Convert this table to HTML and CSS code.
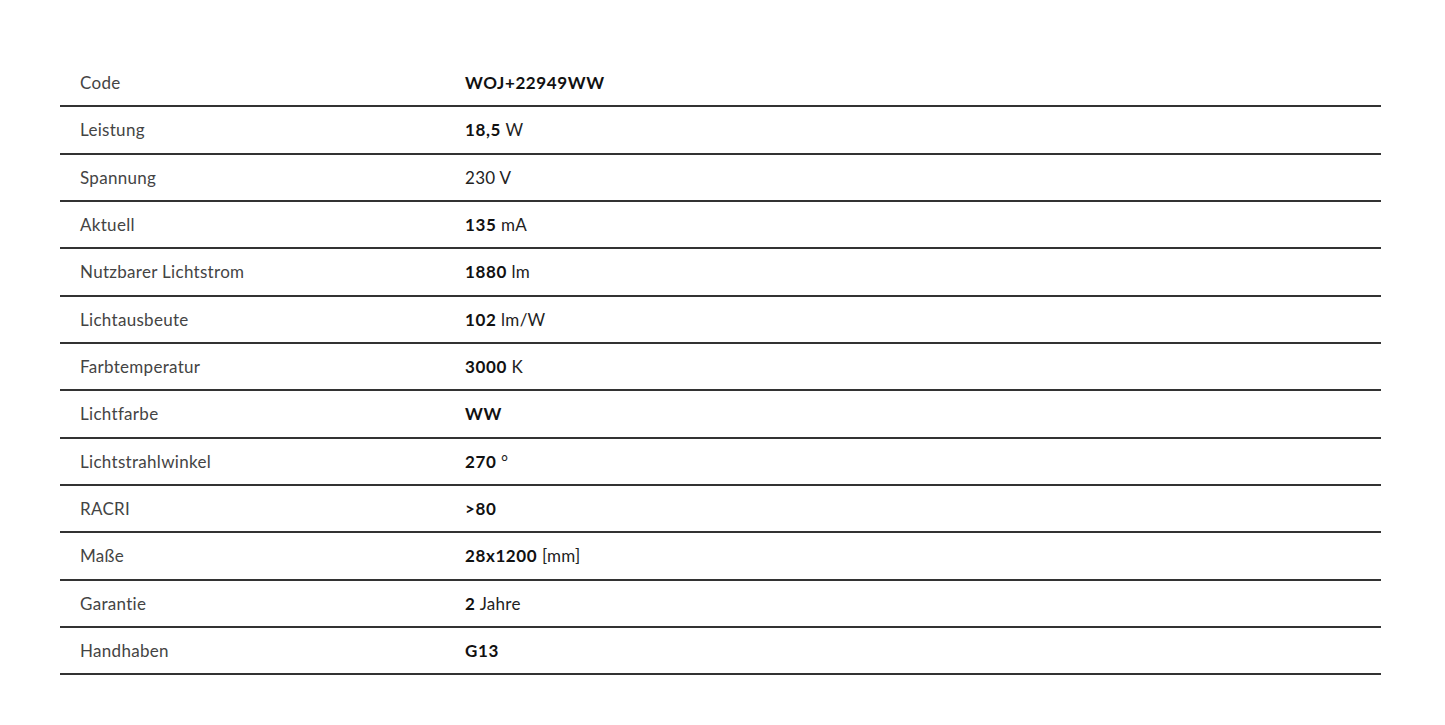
FILE: index.html
```html
<!DOCTYPE html>
<html lang="de">
<head>
<meta charset="utf-8">
<title>Technische Daten</title>
<link rel="stylesheet" href="styles.css">
</head>
<body>
<div class="specs">
  <div class="row"><div class="label">Code</div><div class="value"><b>WOJ+22949WW</b></div></div>
  <div class="row"><div class="label">Leistung</div><div class="value"><b>18,5</b> W</div></div>
  <div class="row"><div class="label">Spannung</div><div class="value">230 V</div></div>
  <div class="row"><div class="label">Aktuell</div><div class="value"><b>135</b> mA</div></div>
  <div class="row"><div class="label">Nutzbarer Lichtstrom</div><div class="value"><b>1880</b> lm</div></div>
  <div class="row"><div class="label">Lichtausbeute</div><div class="value"><b>102</b> lm/W</div></div>
  <div class="row"><div class="label">Farbtemperatur</div><div class="value"><b>3000</b> K</div></div>
  <div class="row"><div class="label">Lichtfarbe</div><div class="value"><b>WW</b></div></div>
  <div class="row"><div class="label">Lichtstrahlwinkel</div><div class="value"><b>270</b> °</div></div>
  <div class="row"><div class="label">RACRI</div><div class="value"><b>&gt;80</b></div></div>
  <div class="row"><div class="label">Maße</div><div class="value"><b>28x1200</b> [mm]</div></div>
  <div class="row"><div class="label">Garantie</div><div class="value"><b>2</b> Jahre</div></div>
  <div class="row"><div class="label">Handhaben</div><div class="value"><b>G13</b></div></div>
</div>
</body>
</html>
```
FILE: styles.css
```css
html, body {
  margin: 0;
  padding: 0;
  background: #ffffff;
}
body {
  font-family: "Lato", "Open Sans", sans-serif;
  font-size: 17px;
  letter-spacing: 0.3px;
  color: #333333;
}
.specs {
  margin: 60px 0 0 60px;
  width: 1321px;
}
.row {
  display: grid;
  grid-template-columns: 385px 1fr;
  align-items: center;
  height: 47.33px;
  box-sizing: border-box;
  padding: 0 20px;
  border-bottom: 2px solid #333333;
}
.label {
  color: #444444;
}
.value {
  color: #222222;
}
.value b {
  font-weight: 700;
  letter-spacing: 0.6px;
  color: #111111;
}
```
